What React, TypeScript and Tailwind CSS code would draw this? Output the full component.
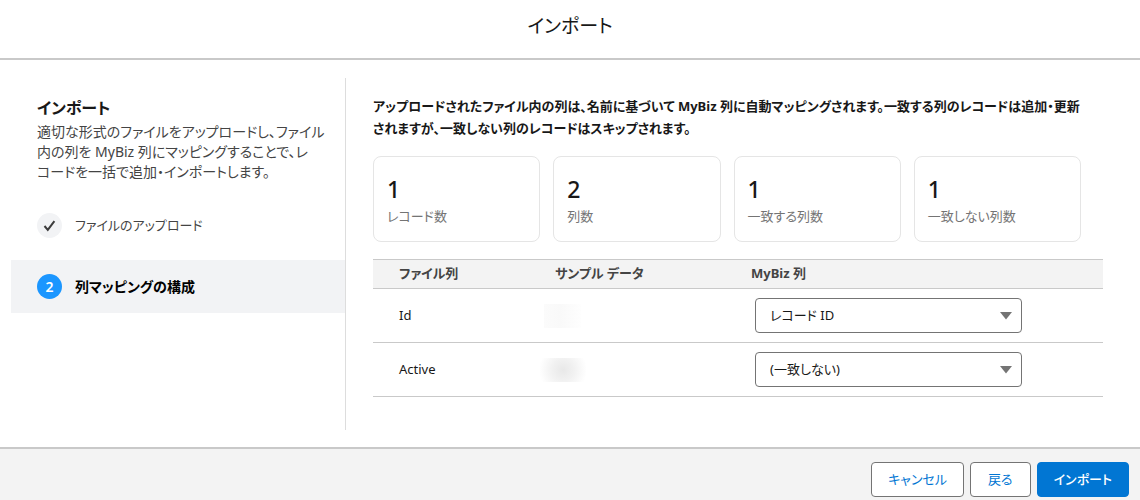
import { useState } from 'react';
import clsx from 'clsx';

const stats = [
  { label: 'レコード数', value: 1 },
  { label: '列数', value: 2 },
  { label: '一致する列数', value: 1 },
  { label: '一致しない列数', value: 1 },
];

const targets = ['レコード ID', 'Active', '(一致しない)'];

const columns = [
  { name: 'Id', target: 'レコード ID', faint: true },
  { name: 'Active', target: '(一致しない)', faint: false },
];

function CheckIcon() {
  return (
    <svg width="13" height="12" viewBox="0 0 13 12" fill="none" aria-hidden="true">
      <path d="M1.5 6 4.8 9.8 11.4 1.2" stroke="#3c3c3c" strokeWidth="2" />
    </svg>
  );
}

function TargetSelect({ column, initial }: { column: string; initial: string }) {
  const [value, setValue] = useState(initial);

  return (
    <div className="relative w-[267px]">
      <select
        aria-label={`${column} のマッピング先`}
        value={value}
        onChange={e => setValue(e.target.value)}
        className="block h-[35px] w-full appearance-none rounded border border-[#747474] bg-white pr-8 pl-[14px] text-[13px] text-[#181818]"
      >
        {targets.map(t => (
          <option key={t}>{t}</option>
        ))}
      </select>
      <svg
        className="pointer-events-none absolute top-[14px] right-[10px]"
        width="12"
        height="8"
        viewBox="0 0 12 8"
        aria-hidden="true"
      >
        <path d="M0 0H12L6 7.5Z" fill="#747474" />
      </svg>
    </div>
  );
}

function Sidebar() {
  return (
    <aside className="w-[335px] shrink-0 border-r border-[#dddddd] pt-[20px]">
      <div className="pr-5 pl-[26px]">
        <h2 className="text-[16px] leading-5 font-bold text-[#181818]">インポート</h2>
        <p className="mt-1 text-[14px] leading-5 text-[#444444]">
          適切な形式のファイルをアップロードし、ファイル<br />
          内の列を MyBiz 列にマッピングすることで、レ<br />
          コードを一括で追加・インポートします。
        </p>
      </div>
      <ol className="mt-[17px]">
        <li className="flex h-[53px] items-center gap-[13px] pl-[26px]">
          <span className="flex size-[25px] items-center justify-center rounded-full bg-[#f2f3f5]">
            <CheckIcon />
          </span>
          <span className="text-[13px] text-[#444444]">ファイルのアップロード</span>
        </li>
        <li aria-current="step" className="mt-2 flex h-[53px] items-center gap-[13px] bg-[#f2f3f5] pl-[26px]">
          <span className="flex size-[25px] items-center justify-center rounded-full bg-[#1b96ff] text-[14px] font-semibold text-white">
            2
          </span>
          <span className="text-[14px] font-bold text-black">列マッピングの構成</span>
        </li>
      </ol>
    </aside>
  );
}

export default function App() {
  return (
    <div className="flex min-h-screen flex-col bg-white font-['Noto_Sans','Noto_Sans_CJK_JP',sans-serif] text-[#181818] [font-feature-settings:'palt']">
      <header className="flex h-[60px] items-center justify-center border-b-2 border-[#c9c9c9] pb-[5px]">
        <h1 className="text-[19px]">インポート</h1>
      </header>

      <main className="flex flex-1 pt-[18px] pr-[37px] pb-[17px] pl-[11px]">
        <Sidebar />

        <section className="min-w-0 flex-1 pt-[17px] pl-[27px]">
          <p className="text-[13px] leading-[22px] font-bold">
            アップロードされたファイル内の列は、名前に基づいて MyBiz 列に自動マッピングされます。一致する列のレコードは追加・更新<br />
            されますが、一致しない列のレコードはスキップされます。
          </p>

          <dl className="mt-[17px] mr-[22px] grid grid-cols-4 gap-[13px]">
            {stats.map(s => (
              <div key={s.label} className="flex h-[86px] flex-col-reverse justify-center rounded-lg border border-[#e5e5e5] px-[13px] pt-[2px]">
                <dt className="text-[13px] leading-[22px] text-[#747474]">{s.label}</dt>
                <dd className="text-[23px] leading-8 font-medium">{s.value}</dd>
              </div>
            ))}
          </dl>

          <table className="mt-[17px] w-full table-fixed text-left text-[13px]">
            <thead>
              <tr className="h-[29px] border-y border-[#c9c9c9] bg-[#f3f3f3] text-[#444444]">
                <th className="w-[156px] pl-[26px] font-bold">ファイル列</th>
                <th className="w-[196px] pl-[26px] font-bold">サンプル データ</th>
                <th className="pl-[26px] font-bold">MyBiz 列</th>
              </tr>
            </thead>
            <tbody>
              {columns.map(c => (
                <tr key={c.name} className="h-[54px] border-b border-[#c9c9c9]">
                  <td className="pl-[26px]">{c.name}</td>
                  <td className="pl-[11px]">
                    <div
                      className={clsx(
                        'h-6',
                        c.faint
                          ? 'ml-1 w-[37px] bg-[linear-gradient(90deg,#fbfbfb_0%,#f9f9f9_45%,#fefefe_100%)]'
                          : 'w-[46px] bg-[radial-gradient(24px_24px_at_center,#e8e8e8_0%,#f1f1f1_45%,#ffffff_100%)]',
                      )}
                    />
                  </td>
                  <td className="pl-[30px]">
                    <TargetSelect column={c.name} initial={c.target} />
                  </td>
                </tr>
              ))}
            </tbody>
          </table>
        </section>
      </main>

      <footer className="flex justify-end gap-[6px] border-t-2 border-[#c9c9c9] bg-[#f3f3f3] pt-[13px] pr-[11px] pb-[3px] text-[13px]">
        <button type="button" className="h-[35px] rounded border border-[#747474] bg-white px-4 text-[#0176d3]">
          キャンセル
        </button>
        <button type="button" className="h-[35px] rounded border border-[#747474] bg-white px-[17px] text-[#0176d3]">
          戻る
        </button>
        <button type="button" className="h-[35px] rounded border border-[#0176d3] bg-[#0176d3] px-4 font-medium text-white">
          インポート
        </button>
      </footer>
    </div>
  );
}
